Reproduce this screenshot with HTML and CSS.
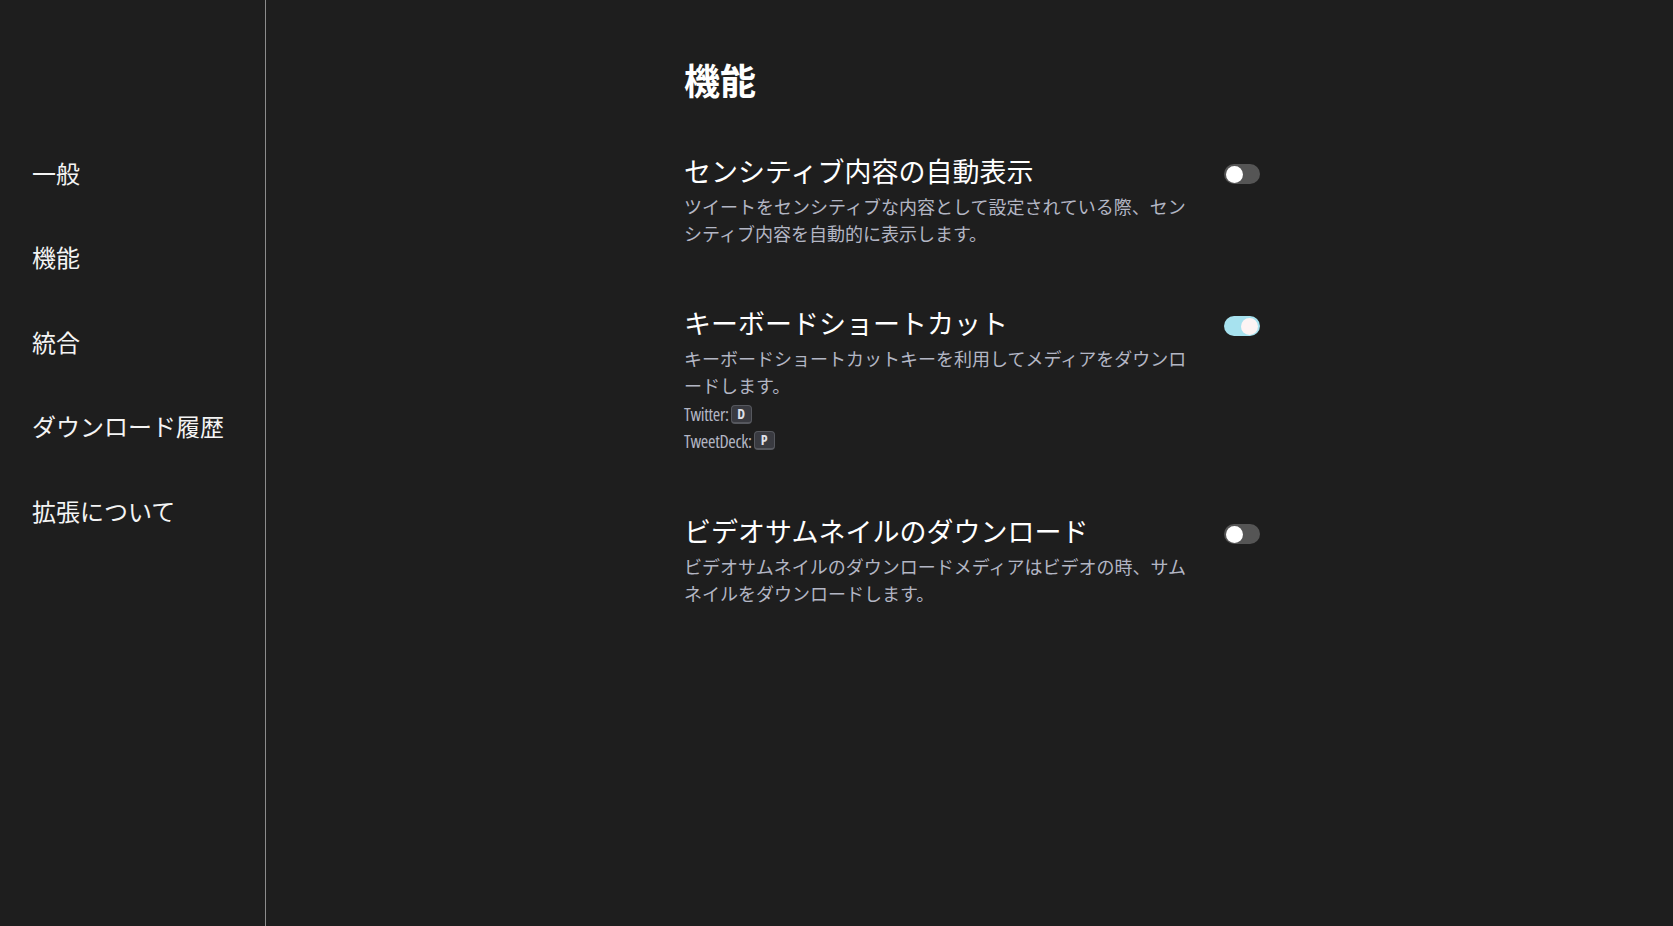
FILE: index.html
```html
<!DOCTYPE html>
<html lang="ja">
<head>
<meta charset="utf-8">
<title>機能</title>
<link rel="stylesheet" href="styles.css">
</head>
<body>
<aside class="sidebar">
  <nav class="nav">
    <div class="nav-item">一般</div>
    <div class="nav-item">機能</div>
    <div class="nav-item">統合</div>
    <div class="nav-item">ダウンロード履歴</div>
    <div class="nav-item">拡張について</div>
  </nav>
</aside>
<main class="main">
  <div class="content">
    <h1 class="page-title">機能</h1>

    <section class="setting">
      <div class="setting-text">
        <div class="setting-title">センシティブ内容の自動表示</div>
        <div class="setting-desc">ツイートをセンシティブな内容として設定されている際、センシティブ内容を自動的に表示します。</div>
      </div>
      <div class="toggle"><span class="knob"></span></div>
    </section>

    <section class="setting">
      <div class="setting-text">
        <div class="setting-title">キーボードショートカット</div>
        <div class="setting-desc">キーボードショートカットキーを利用してメディアをダウンロードします。</div>
        <div class="shortcuts">
          <div class="shortcut"><span class="shortcut-label">Twitter:</span><span class="kbd">D</span></div>
          <div class="shortcut"><span class="shortcut-label">TweetDeck:</span><span class="kbd">P</span></div>
        </div>
      </div>
      <div class="toggle on"><span class="knob"></span></div>
    </section>

    <section class="setting">
      <div class="setting-text">
        <div class="setting-title">ビデオサムネイルのダウンロード</div>
        <div class="setting-desc">ビデオサムネイルのダウンロードメディアはビデオの時、サムネイルをダウンロードします。</div>
      </div>
      <div class="toggle"><span class="knob"></span></div>
    </section>
  </div>
</main>
</body>
</html>
```

FILE: styles.css
```css
html, body {
  margin: 0;
  padding: 0;
  height: 100%;
}

body {
  display: flex;
  background: #1e1e1e;
  color: #ffffff;
  font-family: "Noto Sans CJK JP", "Noto Sans", sans-serif;
  overflow: hidden;
}

.sidebar {
  width: 265px;
  flex: 0 0 265px;
  border-right: 1px solid #8c8c8c;
  height: 100%;
}

.nav {
  display: flex;
  flex-direction: column;
  padding-top: 130.5px;
}

.nav-item {
  font-size: 24px;
  line-height: 84.6px;
  height: 84.6px;
  padding-left: 32px;
  color: #f4f4f4;
}

.main {
  flex: 1;
  display: flex;
  justify-content: center;
  padding-left: 5px;
}

.content {
  width: 576px;
  padding-top: 58px;
}

.page-title {
  margin: 0 0 49px 0;
  font-size: 36px;
  line-height: 43px;
  font-weight: 700;
}

.setting {
  display: flex;
  justify-content: space-between;
  align-items: flex-start;
  gap: 22px;
  margin-bottom: 56px;
}

.setting-text {
  flex: 1;
  min-width: 0;
}

.setting-title {
  font-size: 27px;
  line-height: 42px;
  color: #ffffff;
}

.setting-desc {
  font-size: 18px;
  line-height: 26.7px;
  color: #b3b6c4;
  line-break: normal;
  margin-top: 1px;
}

.shortcuts {
  margin-top: 2px;
}

.shortcut {
  height: 26.7px;
  display: flex;
  align-items: center;
  color: #b3b6c4;
}

.shortcut-label {
  font-family: "Open Sans", "DejaVu Sans", sans-serif;
  font-stretch: 75%;
  font-size: 18px;
  letter-spacing: -0.3px;
}

.kbd {
  display: inline-flex;
  align-items: center;
  justify-content: center;
  width: 19px;
  height: 16px;
  margin-left: 2px;
  border: 1px solid #56585e;
  border-bottom-width: 2px;
  border-radius: 4px;
  background: #393a40;
  color: #dfe0e8;
  font-family: "Open Sans", "DejaVu Sans", sans-serif;
  font-stretch: 75%;
  font-size: 14px;
  font-weight: 700;
  line-height: 1;
}

.toggle {
  flex: 0 0 auto;
  width: 36px;
  height: 20px;
  border-radius: 10px;
  background: #555555;
  margin-top: 14px;
  display: flex;
  align-items: center;
  padding: 0 2px;
  box-sizing: border-box;
}

.toggle .knob {
  width: 17px;
  height: 17px;
  border-radius: 50%;
  background: #ffffff;
}

.toggle.on {
  background: #a7e2ef;
  justify-content: flex-end;
}

.toggle.on .knob {
  background: #fdf4f4;
}
```
